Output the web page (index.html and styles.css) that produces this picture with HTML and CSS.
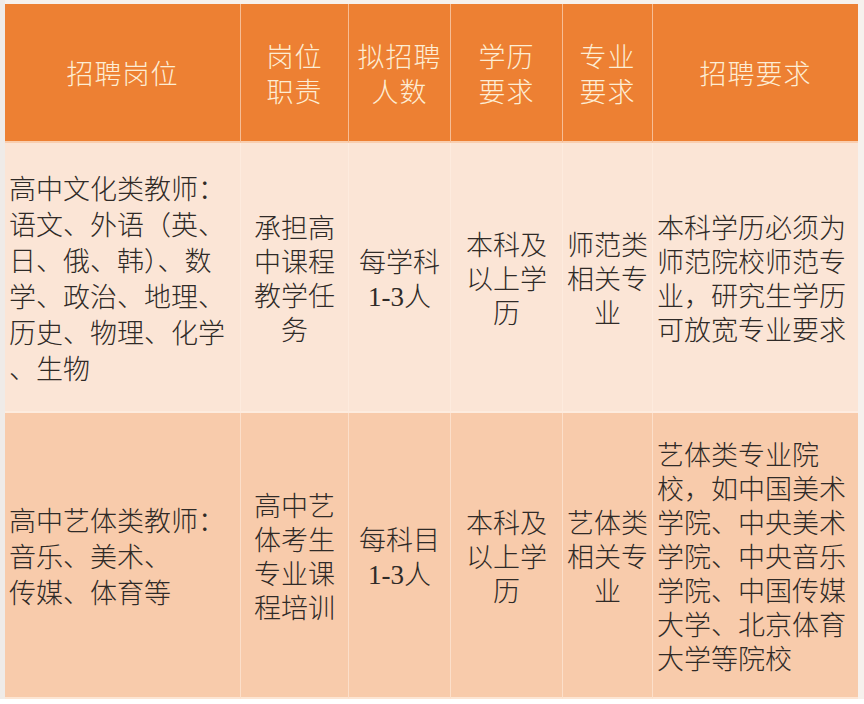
FILE: index.html
```html
<!DOCTYPE html>
<html lang="zh-CN">
<head>
<meta charset="utf-8">
<title>招聘岗位</title>
<link rel="stylesheet" href="styles.css">
</head>
<body>
<div class="frame">
<table class="recruit">
  <colgroup>
    <col class="c1"><col class="c2"><col class="c3"><col class="c4"><col class="c5"><col class="c6">
  </colgroup>
  <thead>
    <tr class="head">
      <th>招聘岗位</th>
      <th>岗位<br>职责</th>
      <th>拟招聘<br>人数</th>
      <th class="sel">学历<br>要求</th>
      <th>专业<br>要求</th>
      <th>招聘要求</th>
    </tr>
  </thead>
  <tbody>
    <tr class="row1">
      <td class="left post">高中文化类教师：<br>语文、外语（英、<br>日、俄、韩）、数<br>学、政治、地理、<br>历史、物理、化学<br>、生物</td>
      <td class="mid">承担高<br>中课程<br>教学任<br>务</td>
      <td class="mid">每学科<br>1-3人</td>
      <td class="mid">本科及<br>以上学<br>历</td>
      <td class="mid">师范类<br>相关专<br>业</td>
      <td class="left req">本科学历必须为<br>师范院校师范专<br>业，研究生学历<br>可放宽专业要求</td>
    </tr>
    <tr class="row2">
      <td class="left post">高中艺体类教师：<br>音乐、美术、<br>传媒、体育等</td>
      <td class="mid">高中艺<br>体考生<br>专业课<br>程培训</td>
      <td class="mid">每科目<br>1-3人</td>
      <td class="mid">本科及<br>以上学<br>历</td>
      <td class="mid">艺体类<br>相关专<br>业</td>
      <td class="left req">艺体类专业院<br>校，如中国美术<br>学院、中央美术<br>学院、中央音乐<br>学院、中国传媒<br>大学、北京体育<br>大学等院校</td>
    </tr>
  </tbody>
</table>
</div>
</body>
</html>
```

FILE: styles.css
```css
html, body {
  margin: 0;
  padding: 0;
  background: #ffffff;
}

body {
  width: 864px;
  height: 704px;
  overflow: hidden;
  font-family: "Liberation Serif", "Noto Sans CJK SC", serif;
}

.frame {
  padding: 4px 6px 0 0;
  background: linear-gradient(to right, #efebe8 0, #efebe8 5px, transparent 5px);
  background-color: #f6f1ed;
  width: 864px;
  box-sizing: border-box;
  height: 699px;
}

.recruit {
  border-collapse: separate;
  border-spacing: 0;
  table-layout: fixed;
  width: 853px;
  margin-left: 5px;
  font-size: 27px;
  line-height: 35px;
  font-weight: 300;
}

.c1 { width: 236px; }
.c2 { width: 108px; }
.c3 { width: 102px; }
.c4 { width: 112px; }
.c5 { width: 90px; }
.c6 { width: 205px; }

.recruit th,
.recruit td {
  padding: 6px 4px 0;
  vertical-align: middle;
  border-right: 1px solid rgba(255, 240, 228, 0.55);
  border-bottom: 2px solid rgba(255, 240, 228, 0.7);
  overflow: hidden;
  white-space: nowrap;
}

.recruit th:last-child,
.recruit td:last-child {
  border-right: none;
}

.head th {
  background: #ed8033;
  color: #fdedd4;
  font-weight: 300;
  text-align: center;
  letter-spacing: 1px;
}

.head { height: 139px; }
.row1 { height: 270px; }
.row2 { height: 286px; }

.row1 td {
  background: #fbe5d6;
  color: #2f2a27;
}

.row2 td {
  background: #f8cbab;
  color: #2f2a27;
}

.left {
  text-align: left;
  padding-left: 5px;
}

.post {
  line-height: 36px;
}

.mid {
  text-align: center;
  line-height: 34px;
}

.req {
  padding-left: 7px;
  line-height: 34px;
}

.sel {
  position: relative;
}

.sel::before {
  content: "";
  position: absolute;
  left: 0;
  right: 0;
  top: -4px;
  height: 2px;
  background: #8fb58a;
}
```
